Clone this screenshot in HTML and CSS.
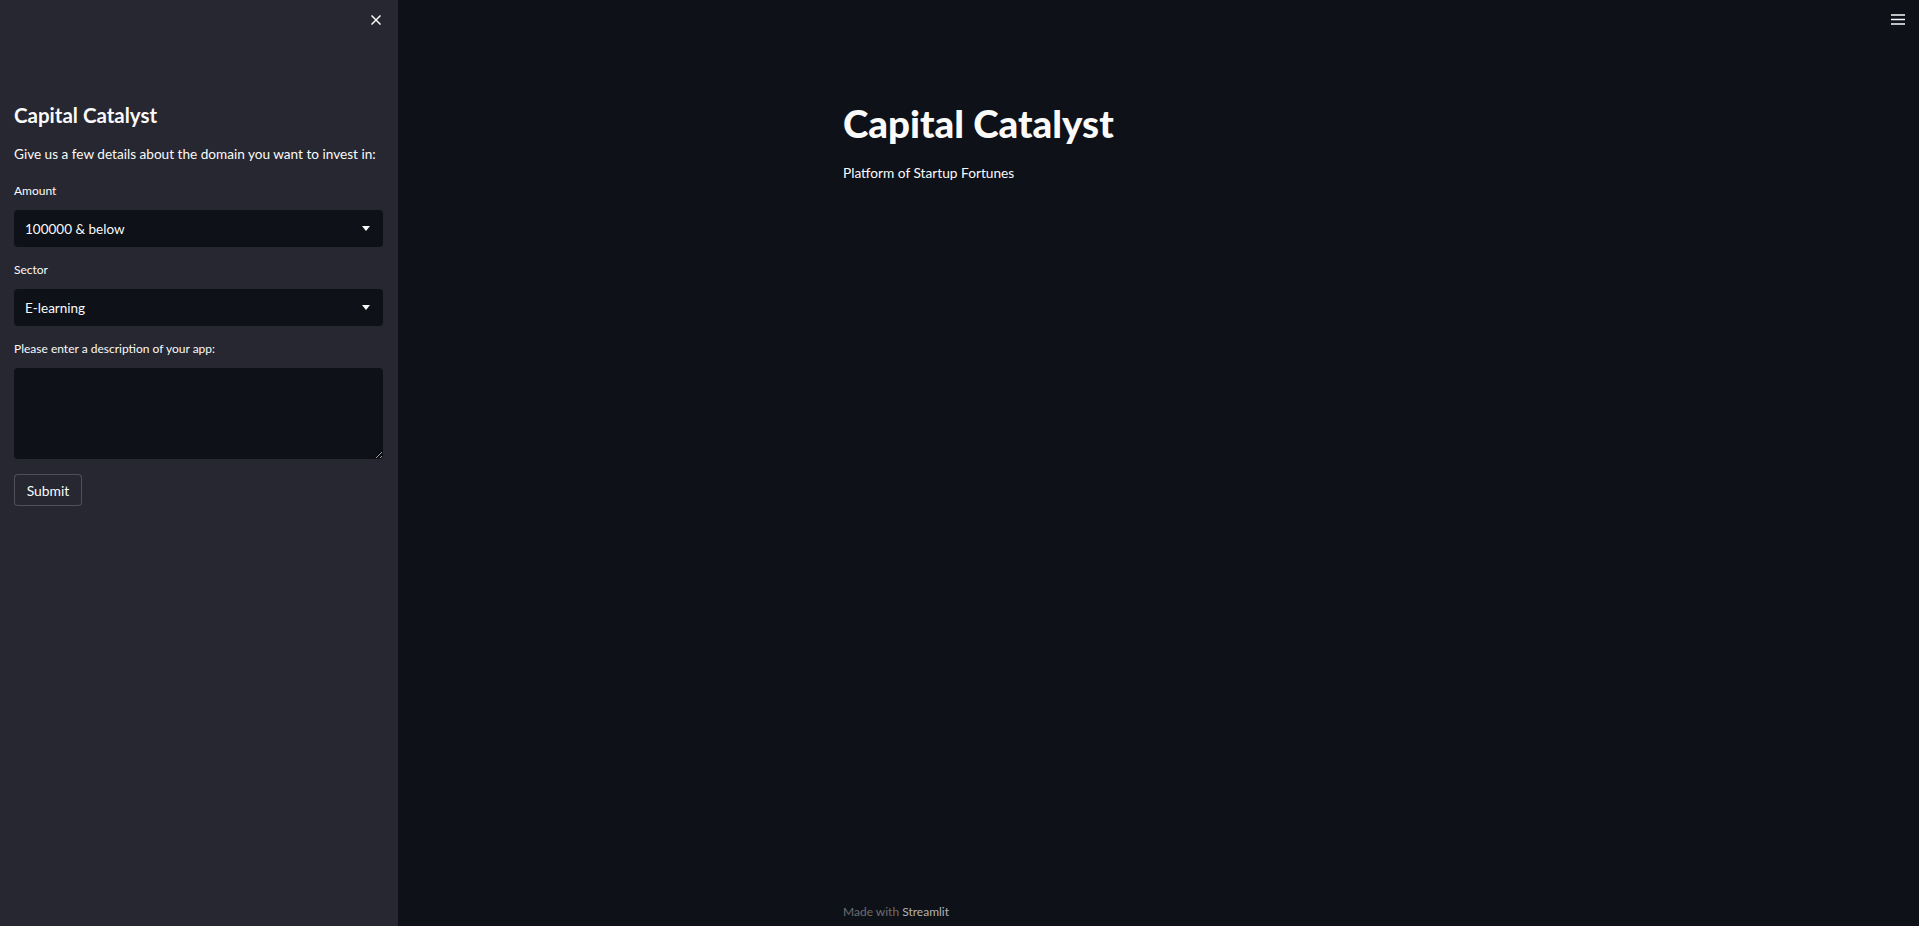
FILE: index.html
```html
<!DOCTYPE html>
<html lang="en">
<head>
    <meta charset="UTF-8">
    <meta name="viewport" content="width=device-width, initial-scale=1.0">
    <title>Capital Catalyst</title>
    <link rel="stylesheet" href="styles.css">
</head>
<body>
    <aside class="sidebar">
        <div class="sidebar-top">
            <button class="icon-btn" aria-label="Close sidebar">
                <svg width="10" height="10" viewBox="0 0 10 10">
                    <path d="M0.5 0.5 L9.5 9.5 M9.5 0.5 L0.5 9.5" stroke="#fafafa" stroke-width="1.5" fill="none"/>
                </svg>
            </button>
        </div>
        <div class="sidebar-content">
            <h2 class="sidebar-title">Capital Catalyst</h2>
            <p class="intro">Give us a few details about the domain you want to invest in:</p>

            <form class="invest-form">
                <label class="field-label">Amount</label>
                <div class="select">
                    <span>100000 &amp; below</span>
                    <svg width="8" height="5" viewBox="0 0 8 5"><path d="M0 0 H8 L4 5 Z" fill="#fafafa"/></svg>
                </div>

                <label class="field-label">Sector</label>
                <div class="select">
                    <span>E-learning</span>
                    <svg width="8" height="5" viewBox="0 0 8 5"><path d="M0 0 H8 L4 5 Z" fill="#fafafa"/></svg>
                </div>

                <label class="field-label" for="desc">Please enter a description of your app:</label>
                <textarea id="desc" class="desc"></textarea>

                <button type="button" class="submit-btn">Submit</button>
            </form>
        </div>
    </aside>

    <main class="main">
        <div class="main-top">
            <button class="icon-btn" aria-label="Menu">
                <svg width="14" height="11" viewBox="0 0 14 11">
                    <path d="M0 1 H14 M0 5.5 H14 M0 10 H14" stroke="#fafafa" stroke-width="1.5" fill="none"/>
                </svg>
            </button>
        </div>
        <div class="block">
            <h1 class="page-title">Capital Catalyst</h1>
            <p class="tagline">Platform of Startup Fortunes</p>
        </div>
        <footer class="footer">Made with <span>Streamlit</span></footer>
    </main>
</body>
</html>
```

FILE: styles.css
```css
body, html {
    margin: 0;
    padding: 0;
    height: 100%;
}

body {
    display: flex;
    font-family: 'Lato', 'Open Sans', sans-serif;
    color: #fafafa;
    background: #0e1117;
    overflow: hidden;
}

.icon-btn {
    background: none;
    border: none;
    padding: 0;
    display: flex;
    cursor: pointer;
}

/* sidebar */
.sidebar {
    width: 398px;
    flex-shrink: 0;
    background: #262730;
    height: 100%;
}

.sidebar-top {
    display: flex;
    justify-content: flex-end;
    padding: 15px 17px 0 0;
    height: 23px;
}

.sidebar-content {
    padding: 0 15px 0 14px;
}

.sidebar-title {
    margin: 63px 0 0;
    font-size: 20.5px;
    font-weight: 700;
    line-height: 28px;
}

.intro {
    margin: 15px 0 0;
    font-size: 13.6px;
    line-height: 20px;
}

.invest-form {
    display: flex;
    flex-direction: column;
}

.field-label {
    font-size: 12px;
    line-height: 18px;
    margin: 14px 0 10px;
}

.field-label:first-child {
    margin-top: 18px;
}

.select {
    height: 37px;
    background: #0e1117;
    border-radius: 4px;
    display: flex;
    align-items: center;
    justify-content: space-between;
    padding: 0 13px 0 11px;
    font-size: 13.5px;
}

.select svg {
    margin-top: -1px;
}

.desc {
    height: 91px;
    background: #0e1117;
    border: none;
    border-radius: 4px;
    box-sizing: border-box;
    color: #fafafa;
    font-family: inherit;
    resize: vertical;
}

.submit-btn {
    align-self: flex-start;
    margin-top: 15px;
    width: 68px;
    height: 32px;
    padding: 0;
    background: #262730;
    color: #fafafa;
    border: 1px solid rgba(250, 250, 250, 0.2);
    border-radius: 4px;
    font-family: inherit;
    font-size: 13.9px;
}

/* main area */
.main {
    flex: 1;
    display: flex;
    flex-direction: column;
    height: 100%;
}

.main-top {
    display: flex;
    justify-content: flex-end;
    padding: 14px 14px 0 0;
    height: 24px;
}

.block {
    width: 631px;
    margin: 0 auto;
    flex: 1;
}

.page-title {
    margin: 61px 0 0;
    font-size: 38.5px;
    font-weight: 900;
    line-height: 48px;
}

.tagline {
    margin: 16px 0 0;
    font-size: 13.7px;
    line-height: 20px;
}

.footer {
    width: 631px;
    margin: 0 auto;
    padding-bottom: 5px;
    font-size: 12px;
    line-height: 18px;
    color: rgba(250, 250, 250, 0.4);
}

.footer span {
    color: rgba(250, 250, 250, 0.7);
}
```
